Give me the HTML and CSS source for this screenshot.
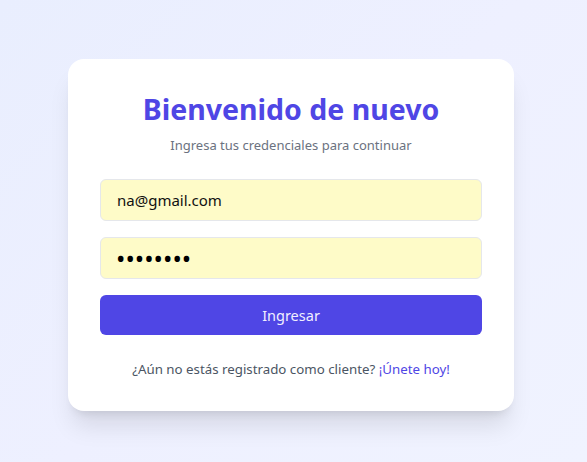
FILE: index.html
```html
<!DOCTYPE html>
<html lang="es">
<head>
<meta charset="utf-8">
<title>Iniciar sesión</title>
<link rel="stylesheet" href="styles.css">
</head>
<body>
<main class="card">
  <h1 class="title">Bienvenido de nuevo</h1>
  <p class="subtitle">Ingresa tus credenciales para continuar</p>
  <form class="form">
    <input class="field" type="email" value="na@gmail.com">
    <input class="field field-pass" type="password" value="12345678">
    <button class="btn" type="button">Ingresar</button>
  </form>
  <p class="footer">¿Aún no estás registrado como cliente? <a class="link" href="#">¡Únete hoy!</a></p>
</main>
</body>
</html>
```
FILE: styles.css
```css
* { box-sizing: border-box; }
html, body { margin: 0; height: 100%; }
body {
  font-family: "Noto Sans", "Open Sans", sans-serif;
  background: linear-gradient(135deg, #e9eefe 0%, #eef0ff 50%, #f0f3ff 100%);
  display: flex;
  align-items: center;
  justify-content: center;
  padding: 8px 5px 0 0;
}
.card {
  width: 446px;
  background: #fff;
  border-radius: 16px;
  padding: 32px;
  box-shadow: 0 20px 25px -5px rgba(0,0,0,0.1), 0 8px 10px -6px rgba(0,0,0,0.1);
}
.title {
  margin: 0 0 8px;
  text-align: center;
  font-size: 28.5px;
  line-height: 36px;
  font-weight: 700;
  color: #4f46e5;
}
.subtitle {
  margin: 0 0 24px;
  text-align: center;
  font-size: 13px;
  line-height: 20px;
  color: #6b7280;
}
.form { display: flex; flex-direction: column; gap: 16px; }
.field {
  height: 42px;
  width: 100%;
  padding: 0 16px;
  border: 1px solid #e5e7eb;
  border-radius: 6px;
  background: #fefbc8;
  font-family: inherit;
  font-size: 15px;
  color: #111;
  outline: none;
}
.field-pass { font-size: 25px; letter-spacing: 0; padding-left: 15px; color: #000; }
.btn {
  height: 40px;
  border: 0;
  border-radius: 6px;
  background: #4f46e5;
  color: #f1f0ff;
  font-family: inherit;
  font-size: 14.5px;
}
.footer {
  margin: 24px 0 0;
  text-align: center;
  font-size: 13.3px;
  line-height: 20px;
  color: #4b5563;
}
.link { color: #4f46e5; text-decoration: none; }
```
